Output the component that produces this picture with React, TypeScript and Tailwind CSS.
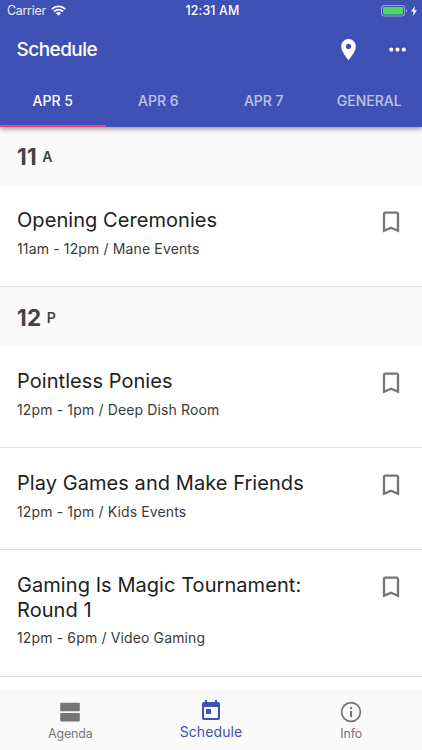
import React, { useState } from 'react';
import { MdBookmarkBorder, MdMoreHoriz, MdPlace, MdToday } from 'react-icons/md';

interface EventItem {
  title: string;
  details: string;
}

interface HourGroup {
  hour: string;
  period: string;
  events: EventItem[];
}

const tabs = ['APR 5', 'APR 6', 'APR 7', 'GENERAL'];

const groups: HourGroup[] = [
  {
    hour: '11',
    period: 'A',
    events: [{ title: 'Opening Ceremonies', details: '11am - 12pm / Mane Events' }],
  },
  {
    hour: '12',
    period: 'P',
    events: [
      { title: 'Pointless Ponies', details: '12pm - 1pm / Deep Dish Room' },
      { title: 'Play Games and Make Friends', details: '12pm - 1pm / Kids Events' },
      { title: 'Gaming Is Magic Tournament: Round 1', details: '12pm - 6pm / Video Gaming' },
    ],
  },
];

const StatusBar = () => (
  <div className="grid h-[22px] grid-cols-3 items-center pr-[5px] pl-[7px] text-[12.4px]">
    <div className="flex items-center gap-[5px]">
      <span className="pt-px tracking-[-0.25px] text-white/90">Carrier</span>
      <svg width="15" height="11" viewBox="0 0 15 11" fill="none" stroke="white" strokeWidth="1.9">
        <path d="M0.8 4.1a9.5 9.5 0 0 1 13.4 0" />
        <path d="M3.1 6.5a6.2 6.2 0 0 1 8.8 0" />
        <path d="M7.5 10.8 5 8.3a3.5 3.5 0 0 1 5 0z" fill="white" stroke="none" />
      </svg>
    </div>
    <span className="pt-px pl-px text-center font-medium tracking-[0.15px]">12:31 AM</span>
    <div className="flex items-center justify-end gap-[3px]">
      <svg width="27" height="12" viewBox="0 0 27 12">
        <rect x="0.5" y="0.5" width="23" height="10.5" rx="2.5" fill="none" stroke="white" strokeOpacity="0.5" />
        <rect x="2" y="2" width="20" height="7.5" rx="1" fill="#4cd964" />
        <path d="M25 4v3.6a2 2 0 0 0 0-3.6z" fill="white" fillOpacity="0.5" />
      </svg>
      <svg width="6" height="10" viewBox="0 0 6 10" fill="white">
        <path d="M4 0 0 5.6h2.6L1.8 10 6 4.2H3.3z" />
      </svg>
    </div>
  </div>
);

const AgendaIcon = () => (
  <svg className="h-[24px] w-[24px]" viewBox="0 0 24 24" fill="currentColor">
    <rect x="2.2" y="2.7" width="19.6" height="8.5" rx="0.8" />
    <rect x="2.2" y="12.9" width="19.6" height="8.5" rx="0.8" />
  </svg>
);

const InfoIcon = () => (
  <svg className="h-[24px] w-[24px]" viewBox="0 0 24 24" fill="none" stroke="currentColor">
    <circle cx="12" cy="12" r="9.4" strokeWidth="1.7" />
    <path d="M12 11v6M12 7v2" strokeWidth="2" />
  </svg>
);

const EventRow: React.FC<EventItem> = ({ title, details }) => (
  <div className="flex items-start justify-between border-b border-[#e0e0e0] bg-white pt-[23px] pr-[17px] pb-[28.5px] pl-[17px]">
    <div className="w-[310px]">
      <h3 className="text-[20px] leading-[24.5px] tracking-[0.06px] text-[#212121]">{title}</h3>
      <p className="mt-[7px] text-[14px] leading-[18px] tracking-[0.14px] text-[#3a3a3a]">{details}</p>
    </div>
    <MdBookmarkBorder className="size-[28px] text-[#757575]" />
  </div>
);

const App = () => {
  const [activeTab, setActiveTab] = useState(0);

  return (
    <div className="flex h-[750px] w-[422px] flex-col overflow-hidden bg-white font-['Inter','Liberation_Sans',sans-serif]">
      {/* App bar with the day tabs */}
      <header className="z-10 h-[126.5px] shrink-0 bg-[#3f51b5] text-white shadow-[0_2px_5px_rgba(0,0,0,0.4)]">
        <StatusBar />
        <div className="flex h-[54px] items-center pr-[12px] pl-[16.5px]">
          <h1 className="flex-1 pt-[2px] text-[19px] font-medium tracking-[-0.55px]">Schedule</h1>
          <MdPlace className="mr-[24px] size-[25px]" />
          <MdMoreHoriz className="size-[25px]" />
        </div>
        <nav className="grid h-[50.5px] grid-cols-4">
          {tabs.map((tab, index) => (
            <button
              key={tab}
              onClick={() => setActiveTab(index)}
              className={`border-b-2 pt-px text-[14px] font-medium ${
                index === activeTab ? 'border-[#e64588] text-white' : 'border-transparent text-white/65'
              }`}
            >
              {tab}
            </button>
          ))}
        </nav>
      </header>

      {/* Events grouped by hour */}
      <main className="-mt-[0.5px] min-h-0 flex-1 overflow-hidden">
        {groups.map((group) => (
          <section key={group.hour}>
            <h2 className="flex h-[59px] items-center gap-[5px] bg-[#fafafa] pt-[2px] pl-[17px] text-[#424242]">
              <span className="text-[22.5px] font-bold tracking-[0.4px]">{group.hour}</span>
              <span className="pb-px text-[14px] font-semibold">{group.period}</span>
            </h2>
            {group.events.map((event) => (
              <EventRow key={event.title} {...event} />
            ))}
          </section>
        ))}
      </main>

      {/* Bottom navigation */}
      <nav className="grid h-[61px] shrink-0 grid-cols-3 bg-[#fafafa] text-[#757575]">
        <button className="flex flex-col items-center pt-[11px]">
          <AgendaIcon />
          <span className="text-[12.4px] leading-[20px] tracking-[-0.1px]">Agenda</span>
        </button>
        <button className="flex flex-col items-center pt-[10px] text-[#3f51b5]">
          <MdToday className="size-[24px]" />
          <span className="text-[14px] leading-[18px] tracking-[0.1px]">Schedule</span>
        </button>
        <button className="flex flex-col items-center pt-[11px] pr-px">
          <InfoIcon />
          <span className="text-[12.4px] leading-[20px] tracking-[-0.1px]">Info</span>
        </button>
      </nav>
    </div>
  );
};

export default App;
